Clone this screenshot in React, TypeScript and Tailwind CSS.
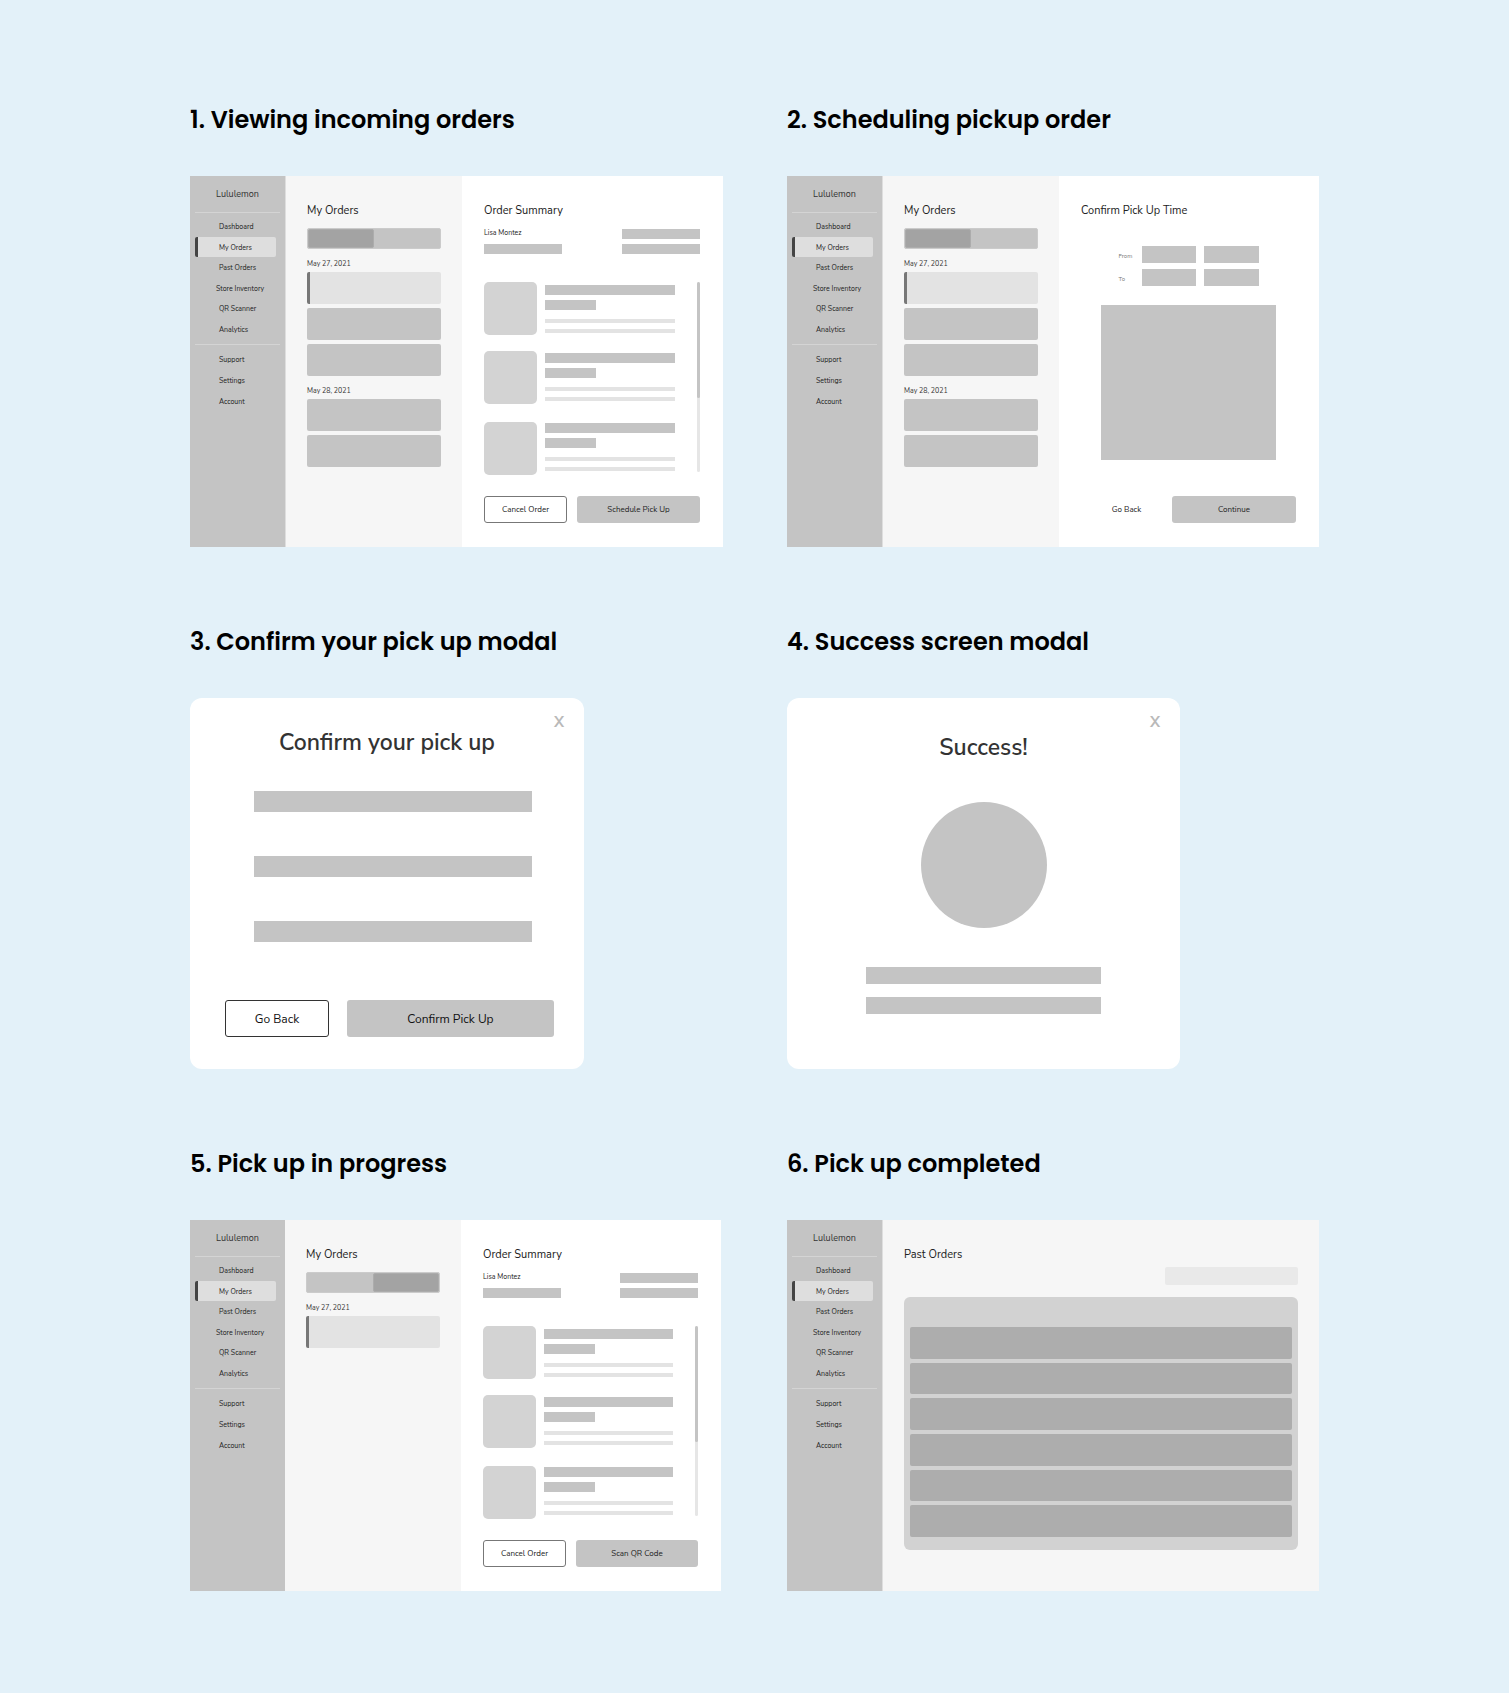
import type { ReactNode } from "react";

const mainLinks = ["Dashboard", "My Orders", "Past Orders", "Store Inventory", "QR Scanner", "Analytics"];
const helpLinks = ["Support", "Settings", "Account"];

function NavLink({ label }: { label: string }) {
  const active = label === "My Orders";
  const indent = label === "Store Inventory" ? "pl-[21px]" : "pl-6";
  return (
    <li
      className={
        active
          ? "mr-1 flex items-center rounded-xs border-l-3 border-[#444444] bg-[#dedede] pl-[21px]"
          : `mr-1 flex items-center ${indent}`
      }
    >
      <a href="#" className="pt-0.5 whitespace-nowrap">
        {label}
      </a>
    </li>
  );
}

function Sidebar({ edge = "w-24 border-r" }: { edge?: string }) {
  return (
    <nav
      className={`shrink-0 border-[#dedede] bg-[#c4c4c4] pr-[5px] pl-[5px] text-[7px] leading-3 text-[#222222] ${edge}`}
    >
      <div className="flex h-9 items-center justify-center text-[9px] text-[#333333]">Lululemon</div>
      <hr className="border-[#d4d4d4]" />
      <ul className="mt-[3px] grid h-[123px] grid-rows-6">
        {mainLinks.map((label) => (
          <NavLink key={label} label={label} />
        ))}
      </ul>
      <hr className="mt-[5px] border-[#d4d4d4]" />
      <ul className="mt-1 grid h-[62px] grid-rows-3">
        {helpLinks.map((label) => (
          <NavLink key={label} label={label} />
        ))}
      </ul>
    </nav>
  );
}

function Title({ children }: { children: ReactNode }) {
  return <h3 className="text-[11px] leading-[18px] text-[#222222]">{children}</h3>;
}

function OrderCard({ selected = false }: { selected?: boolean }) {
  return (
    <li
      className={
        selected
          ? "h-8 rounded-xs border-l-3 border-[#777777] bg-[#e3e3e3]"
          : "h-8 rounded-xs bg-[#c4c4c4]"
      }
    />
  );
}

function OrdersColumn({ progress = false }: { progress?: boolean }) {
  return (
    <div className="w-[176px] shrink-0 bg-[#f6f6f6] px-[21px] pt-[26px] text-[7px] leading-3 text-[#333333]">
      <Title>My Orders</Title>
      <div className="mt-2 grid h-[21px] grid-cols-2 rounded-xs border border-[#cbcbcb] bg-[#c4c4c4]">
        <button
          aria-label="Incoming"
          className={progress ? "rounded-xs" : "rounded-xs border border-[#acacac] bg-[#a3a3a3]"}
        />
        <button
          aria-label="In progress"
          className={progress ? "rounded-xs border border-[#acacac] bg-[#a3a3a3]" : "rounded-xs"}
        />
      </div>
      <p className="mt-[9px]">May 27, 2021</p>
      <ul className="mt-0.5 flex flex-col gap-1">
        <OrderCard selected />
        {!progress && <OrderCard />}
        {!progress && <OrderCard />}
      </ul>
      {!progress && (
        <>
          <p className="mt-[9px]">May 28, 2021</p>
          <ul className="mt-0.5 flex flex-col gap-1">
            <OrderCard />
            <OrderCard />
          </ul>
        </>
      )}
    </div>
  );
}

function SummaryItem({ className, textClass }: { className: string; textClass: string }) {
  return (
    <li className={`flex gap-2 ${className}`}>
      <div className="size-[53px] shrink-0 rounded-[5px] bg-[#d3d3d3]" />
      <div className={`flex-1 ${textClass}`}>
        <div className="h-2.5 bg-[#c4c4c4]" />
        <div className="mt-[5px] h-2.5 w-[51px] bg-[#c4c4c4]" />
        <div className="mt-[9px] h-1 bg-[#e3e3e3]" />
        <div className="mt-1.5 h-1 bg-[#e3e3e3]" />
      </div>
    </li>
  );
}

function OrderSummary({ action }: { action: string }) {
  return (
    <div className="flex-1 bg-white pt-[26px] pr-[23px] pb-6 pl-[22px] text-[#222222]">
      <Title>Order Summary</Title>
      <div className="mt-1.5 flex justify-between text-[7px] leading-[14px]">
        <div className="w-[78px]">
          <p>Lisa Montez</p>
          <div className="mt-1 h-2.5 bg-[#c4c4c4]" />
        </div>
        <div className="w-[78px] pt-[3px]">
          <div className="h-2.5 bg-[#c4c4c4]" />
          <div className="mt-[5px] h-2.5 bg-[#c4c4c4]" />
        </div>
      </div>
      <div className="mt-7 flex">
        <ul className="flex-1 pr-[22px]">
          <SummaryItem className="" textClass="pt-[3px]" />
          <SummaryItem className="mt-4" textClass="pt-0.5" />
          <SummaryItem className="mt-[18px]" textClass="pt-px" />
        </ul>
        <div className="h-[190px] w-[3px] rounded-full bg-[#e6e6e6]">
          <div className="h-[116px] rounded-full bg-[#c4c4c4]" />
        </div>
      </div>
      <div className="mt-[21px] flex gap-2.5 text-[8px] leading-3">
        <button className="h-[27px] w-[83px] rounded-[3px] border border-[#777777]">Cancel Order</button>
        <button className="h-[27px] flex-1 rounded-[3px] bg-[#c4c4c4]">{action}</button>
      </div>
    </div>
  );
}

function TimeRow({ label }: { label: string }) {
  const id = `time-${label.toLowerCase()}`;
  return (
    <div className="flex items-center">
      <label htmlFor={id} className="w-[23px] pt-0.5">
        {label}
      </label>
      <input id={id} className="mr-2 h-[17px] w-[54px] bg-[#c4c4c4]" />
      <input aria-label={`${label} period`} className="h-[17px] w-[55px] bg-[#c4c4c4]" />
    </div>
  );
}

function PickUpTime() {
  return (
    <div className="flex-1 bg-white pt-[26px] pr-[23px] pb-6 pl-[22px] text-[#222222]">
      <Title>Confirm Pick Up Time</Title>
      <div className="mt-[26px] flex flex-col items-center gap-1.5 text-[6px] leading-3 text-[#777777]">
        <TimeRow label="From" />
        <TimeRow label="To" />
      </div>
      <div className="mx-auto mt-[19px] h-[155px] w-[175px] bg-[#c4c4c4]" />
      <div className="mt-9 flex text-[8px] leading-3">
        <button className="h-[27px] w-[91px]">Go Back</button>
        <button className="h-[27px] flex-1 rounded-[3px] bg-[#c4c4c4]">Continue</button>
      </div>
    </div>
  );
}

function PastOrders() {
  return (
    <div className="flex-1 bg-[#f6f6f6] pt-[26px] pr-[21px] pb-[41px] pl-[21px]">
      <Title>Past Orders</Title>
      <div className="mt-[3px] flex justify-end">
        <input aria-label="Search past orders" className="h-[18px] w-[133px] rounded-xs bg-[#e9e9e9]" />
      </div>
      <div className="mt-3 rounded-md bg-[#d2d2d2] px-1.5 pt-[30px] pb-[13px]">
        <ul className="grid h-[210px] grid-rows-6 gap-1">
          {[1, 2, 3, 4, 5, 6].map((n) => (
            <li key={n} className="rounded-xs bg-[#adadad]" />
          ))}
        </ul>
      </div>
    </div>
  );
}

function Modal({
  title,
  className,
  titleClass,
  children,
}: {
  title: string;
  className: string;
  titleClass: string;
  children: ReactNode;
}) {
  return (
    <div className={`min-h-[371px] rounded-xl bg-white ${className}`}>
      <div className="flex justify-end pt-3 pr-5">
        <button aria-label="Close" className="text-[15px] leading-6 font-bold text-[#b9b9b9]">
          X
        </button>
      </div>
      <h3 className={`text-center text-[23px] font-semibold text-[#333333] ${titleClass}`}>{title}</h3>
      {children}
    </div>
  );
}

function Step({ title, children }: { title: string; children: ReactNode }) {
  return (
    <section>
      <h2 className="font-['Poppins','Inter',sans-serif] text-[24px] leading-9 font-semibold whitespace-nowrap text-black">
        {title}
      </h2>
      <div className="mt-[38px]">{children}</div>
    </section>
  );
}

export default function App() {
  return (
    <main className="grid min-h-screen grid-cols-[533fr_532fr] content-start gap-x-16 gap-y-[77px] bg-[#e3f1f9] px-[190px] py-[102px] font-['Nunito_Sans','Lato',sans-serif]">
      <Step title="1. Viewing incoming orders">
        <div className="flex">
          <Sidebar />
          <OrdersColumn />
          <OrderSummary action="Schedule Pick Up" />
        </div>
      </Step>
      <Step title="2. Scheduling pickup order">
        <div className="flex">
          <Sidebar />
          <OrdersColumn />
          <PickUpTime />
        </div>
      </Step>
      <Step title="3. Confirm your pick up modal">
        <Modal title="Confirm your pick up" className="max-w-[394px]" titleClass="leading-[18px]">
          <div className="mt-[39px] mr-[52px] ml-16 flex flex-col gap-11">
            <div className="h-[21px] bg-[#c4c4c4]" />
            <div className="h-[21px] bg-[#c4c4c4]" />
            <div className="h-[21px] bg-[#c4c4c4]" />
          </div>
          <div className="mt-[58px] mr-[30px] ml-[35px] flex gap-[18px] text-[12px] text-[#111111]">
            <button className="h-[37px] w-[104px] rounded-[3px] border border-[#333333]">Go Back</button>
            <button className="h-[37px] flex-1 rounded-[3px] bg-[#c4c4c4]">Confirm Pick Up</button>
          </div>
        </Modal>
      </Step>
      <Step title="4. Success screen modal">
        <Modal title="Success!" className="max-w-[393px]" titleClass="leading-7">
          <div className="mx-auto mt-10 size-[126px] rounded-full bg-[#c4c4c4]" />
          <div className="mx-[79px] mt-[39px] flex flex-col gap-[13px]">
            <div className="h-[17px] bg-[#c4c4c4]" />
            <div className="h-[17px] bg-[#c4c4c4]" />
          </div>
        </Modal>
      </Step>
      <Step title="5. Pick up in progress">
        <div className="mr-0.5 flex">
          <Sidebar edge="w-[95px]" />
          <OrdersColumn progress />
          <OrderSummary action="Scan QR Code" />
        </div>
      </Step>
      <Step title="6. Pick up completed">
        <div className="flex">
          <Sidebar />
          <PastOrders />
        </div>
      </Step>
    </main>
  );
}
